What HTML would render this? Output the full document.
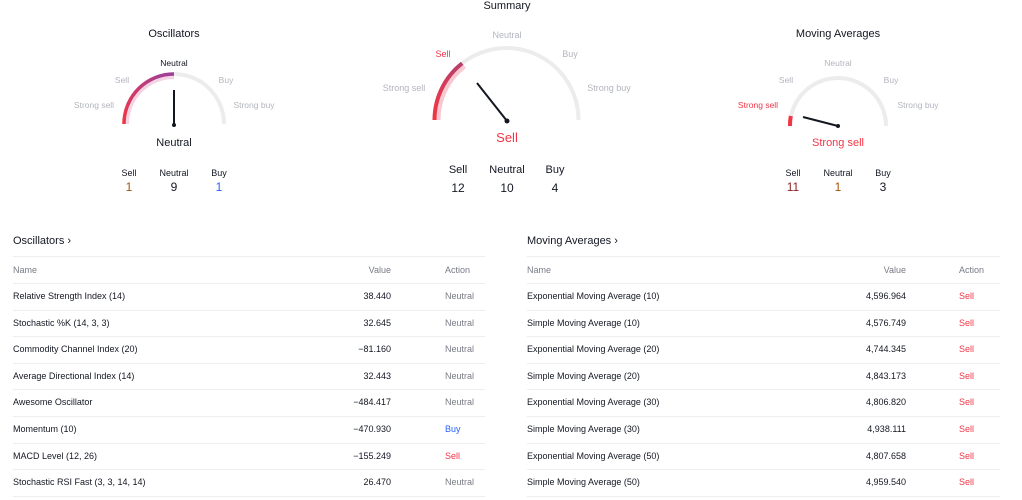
<!DOCTYPE html>
<html><head><meta charset="utf-8"><style>
body{margin:0;width:1022px;height:500px;overflow:hidden;background:#fff;font-family:"Liberation Sans",sans-serif;color:#131722;position:relative}
.a{position:absolute;white-space:nowrap}
.c{transform:translateX(-50%)}
.t{font-size:11px}
.g{color:#b2b5be;font-size:8.5px}
.r{color:#f23645}
.s{font-size:9px}
.line{position:absolute;height:1px;background:#eceef2}
.hd{color:#787b86}
</style></head><body>
<svg class="a" style="left:0;top:0" width="1022" height="210">
<defs>
<linearGradient id="g1" x1="0" y1="1" x2="1" y2="0"><stop offset="0" stop-color="#f23645"/><stop offset="1" stop-color="#9c3f9e"/></linearGradient>
<linearGradient id="g2" x1="0" y1="1" x2="1" y2="0"><stop offset="0" stop-color="#f23645"/><stop offset="1" stop-color="#b5406f"/></linearGradient>
</defs>
<path d="M124 124 A50 50 0 0 1 224 124" fill="none" stroke="#ececec" stroke-width="4"/>
<path d="M127.5 124 A46.5 46.5 0 0 1 174 77.5" fill="none" stroke="#f3d3e4" stroke-width="3"/>
<path d="M124 124 A50 50 0 0 1 174 74" fill="none" stroke="url(#g1)" stroke-width="3.5"/>
<line x1="174" y1="90" x2="174" y2="125" stroke="#131722" stroke-width="2"/>
<circle cx="174" cy="125" r="2" fill="#131722"/>
<path d="M434.5 120 A72 72 0 0 1 578.5 120" fill="none" stroke="#ececec" stroke-width="4"/>
<path d="M438.5 120 A68 68 0 0 1 464.6 66.4" fill="none" stroke="#f7c8d0" stroke-width="4"/>
<path d="M434.5 120 A72 72 0 0 1 462.2 63.3" fill="none" stroke="url(#g2)" stroke-width="4"/>
<line x1="477" y1="83" x2="507" y2="121" stroke="#131722" stroke-width="2"/>
<circle cx="507" cy="121" r="2.5" fill="#131722"/>
<path d="M790 126 A48 48 0 0 1 886 126" fill="none" stroke="#ececec" stroke-width="4"/>
<path d="M790 126 A48 48 0 0 1 790.8 116" fill="none" stroke="#f23645" stroke-width="4"/>
<line x1="803" y1="117" x2="838" y2="126" stroke="#131722" stroke-width="2"/>
<circle cx="838" cy="126" r="2" fill="#131722"/>
</svg>

<div class="a c t" style="left:507px;top:0">Summary</div>
<div class="a c t" style="left:174px;top:28px">Oscillators</div>
<div class="a c t" style="left:838px;top:28px">Moving Averages</div>

<div class="a c" style="left:174px;top:58px;font-size:8.5px">Neutral</div>
<div class="a c g" style="left:122px;top:75px">Sell</div>
<div class="a c g" style="left:226px;top:75px">Buy</div>
<div class="a c g" style="left:94px;top:100px">Strong sell</div>
<div class="a c g" style="left:254px;top:100px">Strong buy</div>
<div class="a c" style="left:174px;top:137px;font-size:11px">Neutral</div>
<div class="a c s" style="left:129px;top:168px">Sell</div>
<div class="a c s" style="left:174px;top:168px">Neutral</div>
<div class="a c s" style="left:219px;top:168px">Buy</div>
<div class="a c" style="left:129px;top:180px;font-size:12px;color:#a4540b">1</div>
<div class="a c" style="left:174px;top:180px;font-size:12px">9</div>
<div class="a c" style="left:219px;top:180px;font-size:12px;color:#2962ff">1</div>

<div class="a c g" style="left:507px;top:30px;font-size:9px">Neutral</div>
<div class="a c r" style="left:443px;top:49px;font-size:9px">Sell</div>
<div class="a c g" style="left:570px;top:49px;font-size:9px">Buy</div>
<div class="a c g" style="left:404px;top:83px;font-size:9px">Strong sell</div>
<div class="a c g" style="left:609px;top:83px;font-size:9px">Strong buy</div>
<div class="a c r" style="left:507px;top:130px;font-size:13px">Sell</div>
<div class="a c" style="left:458px;top:164px;font-size:11px">Sell</div>
<div class="a c" style="left:507px;top:164px;font-size:11px">Neutral</div>
<div class="a c" style="left:555px;top:164px;font-size:11px">Buy</div>
<div class="a c" style="left:458px;top:181px;font-size:12px">12</div>
<div class="a c" style="left:507px;top:181px;font-size:12px">10</div>
<div class="a c" style="left:555px;top:181px;font-size:12px">4</div>

<div class="a c g" style="left:838px;top:58px">Neutral</div>
<div class="a c g" style="left:786px;top:75px">Sell</div>
<div class="a c g" style="left:891px;top:75px">Buy</div>
<div class="a c r" style="left:758px;top:100px;font-size:8.5px">Strong sell</div>
<div class="a c g" style="left:918px;top:100px">Strong buy</div>
<div class="a c r" style="left:838px;top:137px;font-size:11px">Strong sell</div>
<div class="a c s" style="left:793px;top:168px">Sell</div>
<div class="a c s" style="left:838px;top:168px">Neutral</div>
<div class="a c s" style="left:883px;top:168px">Buy</div>
<div class="a c" style="left:793px;top:180px;font-size:12px;color:#8c1f1f">11</div>
<div class="a c" style="left:838px;top:180px;font-size:12px;color:#a4540b">1</div>
<div class="a c" style="left:883px;top:180px;font-size:12px">3</div>

<div id="tbls"></div>
<script>
const L=[["Relative Strength Index (14)","38.440","Neutral"],["Stochastic %K (14, 3, 3)","32.645","Neutral"],["Commodity Channel Index (20)","−81.160","Neutral"],["Average Directional Index (14)","32.443","Neutral"],["Awesome Oscillator","−484.417","Neutral"],["Momentum (10)","−470.930","Buy"],["MACD Level (12, 26)","−155.249","Sell"],["Stochastic RSI Fast (3, 3, 14, 14)","26.470","Neutral"]];
const R=[["Exponential Moving Average (10)","4,596.964"],["Simple Moving Average (10)","4,576.749"],["Exponential Moving Average (20)","4,744.345"],["Simple Moving Average (20)","4,843.173"],["Exponential Moving Average (30)","4,806.820"],["Simple Moving Average (30)","4,938.111"],["Exponential Moving Average (50)","4,807.658"],["Simple Moving Average (50)","4,959.540"]];
let h="";
function tbl(x0,x1,title,rows,vr,ax){
 h+=`<div class="a t" style="left:${x0}px;top:235px">${title} ›</div>`;
 h+=`<div class="line" style="left:${x0}px;width:${x1-x0}px;top:256px"></div>`;
 h+=`<div class="a s hd" style="left:${x0}px;top:265px">Name</div><div class="a s hd" style="right:${1022-vr}px;top:265px">Value</div><div class="a s hd" style="left:${ax}px;top:265px">Action</div>`;
 rows.forEach((r,i)=>{const y=283+26.6*i;
  h+=`<div class="line" style="left:${x0}px;width:${x1-x0}px;top:${y}px"></div>`;
  const a=r[2]||"Sell";const col=a=="Sell"?"#f23645":a=="Buy"?"#2962ff":"#787b86";
  h+=`<div class="a s" style="left:${x0}px;top:${y+8}px">${r[0]}</div><div class="a s" style="right:${1022-vr}px;top:${y+8}px">${r[1]}</div><div class="a s" style="left:${ax}px;top:${y+8}px;color:${col}">${a}</div>`;
 });
 h+=`<div class="line" style="left:${x0}px;width:${x1-x0}px;top:${283+26.6*8}px"></div>`;
}
tbl(13,485,"Oscillators",L,391,445);
tbl(527,1000,"Moving Averages",R,906,959);
document.getElementById("tbls").innerHTML=h;
</script>
</body></html>
